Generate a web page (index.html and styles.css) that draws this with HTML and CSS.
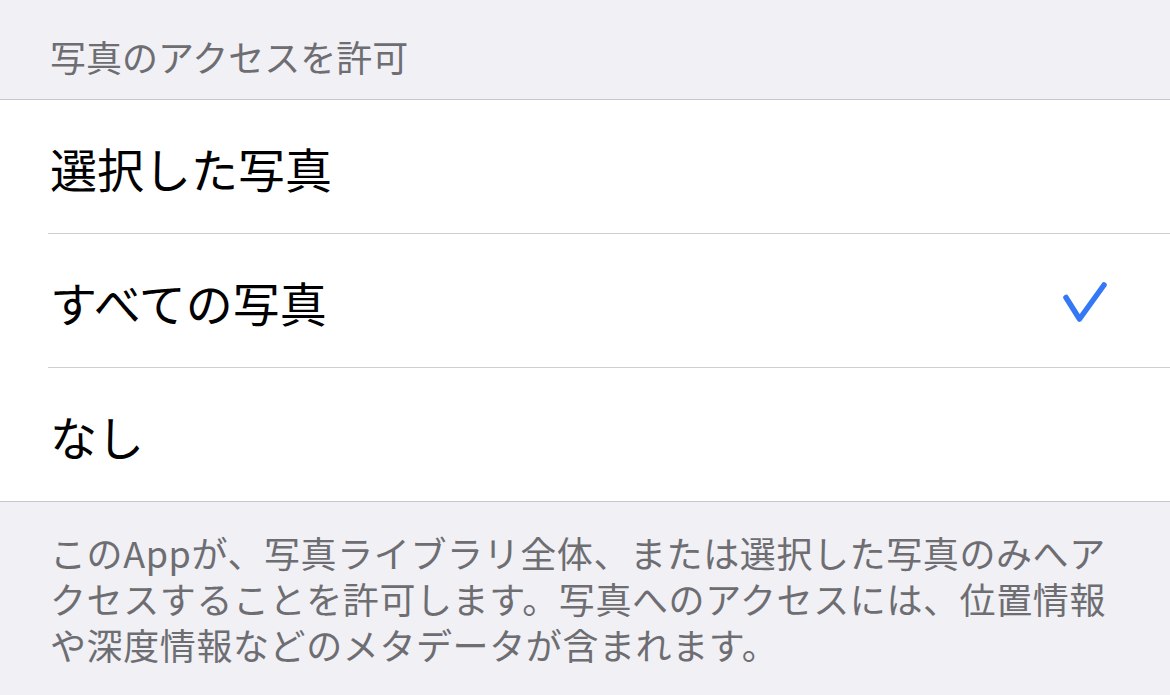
FILE: index.html
```html
<!DOCTYPE html>
<html lang="ja">
<head>
<meta charset="utf-8">
<link rel="stylesheet" href="styles.css">
</head>
<body>
<div class="page">
  <div class="section-header">写真のアクセスを許可</div>
  <ul class="list">
    <li class="row"><span class="label">選択した写真</span></li>
    <li class="row"><span class="label">すべての写真</span>
      <svg class="check" width="48" height="48" viewBox="0 0 48 48"><path d="M6 20.5 L19.5 42 L44 8" fill="none" stroke="#3478f6" stroke-width="5.5" stroke-linecap="round" stroke-linejoin="round"/></svg>
    </li>
    <li class="row"><span class="label">なし</span></li>
  </ul>
  <div class="footer">
    <div class="line">このAppが、写真ライブラリ全体、または選択した写真のみへア</div>
    <div class="line">クセスすることを許可します。写真へのアクセスには、位置情報</div>
    <div class="line">や深度情報などのメタデータが含まれます。</div>
  </div>
</div>
</body>
</html>
```
FILE: styles.css
```css
html, body {
  margin: 0;
  padding: 0;
}
body {
  background: #f0f0f5;
  font-family: "Noto Sans CJK JP", "Noto Sans", sans-serif;
  width: 1170px;
  height: 695px;
  overflow: hidden;
}
.page {
  display: flex;
  flex-direction: column;
}
.section-header {
  padding: 33px 50px 20px;
  line-height: 46px;
  font-size: 36px;
  color: #6d6d72;
  border-bottom: 1px solid #c8c7cc;
}
.list {
  list-style: none;
  margin: 0;
  padding: 0 0 0 48px;
  background: #fff;
  border-bottom: 1px solid #c8c7cc;
}
.row {
  height: 133px;
  display: flex;
  align-items: center;
  justify-content: space-between;
  padding: 0 62px 0 2px;
  border-bottom: 1px solid #cfcfd3;
  font-size: 47px;
  color: #000;
}
.row:last-child {
  border-bottom: none;
}
.label {
  line-height: 56px;
  margin-top: 2px;
}
.check {
  display: block;
  margin-top: 1px;
}
.footer {
  padding: 27px 50px 0;
  font-size: 36px;
  color: #6d6d72;
  letter-spacing: 0.6px;
  white-space: nowrap;
  display: flex;
  flex-direction: column;
}
.line {
  height: 46px;
  line-height: 46px;
}
```
